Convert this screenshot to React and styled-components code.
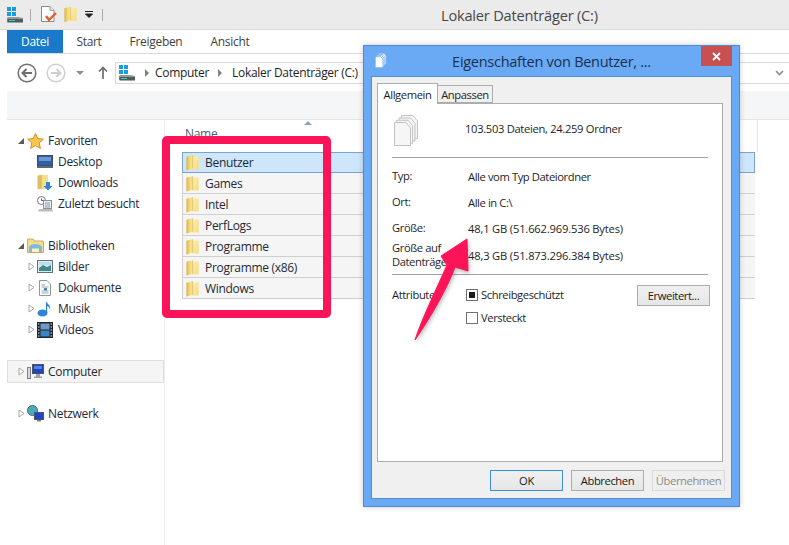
import React from "react"
import styled, { createGlobalStyle } from "styled-components"

const GlobalStyle = createGlobalStyle`
  html, body {
    margin: 0;
    padding: 0;
    background: #fff;
  }
  * {
    box-sizing: border-box;
  }
`

const Screen = styled.div`
  position: relative;
  width: 789px;
  height: 545px;
  overflow: hidden;
  display: flex;
  flex-direction: column;
  background: #fff;
  color: #1e1e1e;
  font-family: "Open Sans", "Noto Sans", sans-serif;
  font-size: 12px;
  letter-spacing: -0.3px;
`

const TitleBar = styled.header`
  position: relative;
  height: 30px;
  flex: none;
  display: flex;
  align-items: center;
  padding-left: 7px;
  background: #ebebeb;
  border-bottom: 1px solid #dcdcdc;
`

const QuickSep = styled.span`
  width: 1px;
  height: 12px;
  margin: 0 ${(p) => p.$gap}px;
  background: #a8a8a8;
`

const QuickSpacer = styled.span`
  width: 4px;
`

const WindowTitle = styled.div`
  position: absolute;
  left: 441px;
  top: 5px;
  font-size: 14.6px;
  letter-spacing: -0.2px;
  color: #474747;
`

const Chrome = styled.div`
  flex: 1;
  min-height: 0;
  display: flex;
  flex-direction: column;
  margin-left: 7px;
`

const RibbonTabs = styled.nav`
  height: 24px;
  flex: none;
  display: flex;
  border-bottom: 1px solid #dadbdc;
`

const RibbonTab = styled.div`
  width: ${(p) => p.$w}px;
  height: 23px;
  display: flex;
  align-items: center;
  justify-content: center;
  color: ${(p) => (p.$active ? "#fff" : "#3f3f3f")};
  background: ${(p) => (p.$active ? "#1979ca" : "transparent")};
`

const AddressRow = styled.div`
  height: 37px;
  flex: none;
  display: flex;
  align-items: center;
  padding: 0 0 0 10px;
`

const NavButtons = styled.div`
  width: 98px;
  flex: none;
  display: flex;
  align-items: center;
`

const AddressBox = styled.div`
  flex: 1;
  height: 22px;
  display: flex;
  align-items: center;
  padding: 0 5px 0 3px;
  border: 1px solid #d9d9d9;
  border-right: none;
  color: #1e1e1e;
`

const Crumb = styled.span`
  margin-left: ${(p) => p.$left}px;
`

const CrumbCaret = styled.span`
  width: 0;
  height: 0;
  margin-left: ${(p) => p.$left}px;
  border-style: solid;
  border-width: 4px 0 4px 4px;
  border-color: transparent transparent transparent #808080;
`

const AddressChevron = styled.svg`
  margin-left: auto;
`

const SearchBand = styled.div`
  height: 29px;
  flex: none;
  background: #f5f6f7;
  border-bottom: 1px solid #e4e5e6;
`

const Content = styled.div`
  flex: 1;
  min-height: 0;
  display: flex;
`

const NavPane = styled.aside`
  width: 158px;
  flex: none;
  padding-top: 10px;
  border-right: 1px solid #ececec;
  display: flex;
  flex-direction: column;
  gap: 21px;
`

const NavGroup = styled.div`
  display: flex;
  flex-direction: column;
`

const NavRow = styled.div`
  height: 21px;
  display: flex;
  align-items: center;
  margin: 0 1px;
  padding-left: ${(p) => p.$indent}px;
  color: #1e2a36;
  background: ${(p) => (p.$selected ? "#f5f5f5" : "transparent")};
  outline: ${(p) => (p.$selected ? "1px solid #dedede" : "none")};
`

const Expander = styled.span`
  width: 9px;
  flex: none;
  display: flex;
  align-items: center;
`

const Collapse = styled.span`
  width: 0;
  height: 0;
  border-style: solid;
  border-width: 0 0 6px 6px;
  border-color: transparent transparent #5a5a5a transparent;
`

const NavIcon = styled.svg`
  flex: none;
  margin-right: 4px;
`

const LeafIcon = styled(NavIcon)`
  margin-right: 5px;
`

const FilePane = styled.main`
  width: 590px;
  padding-left: 17px;
`

const ColumnHeader = styled.div`
  position: relative;
  width: 576px;
  height: 32px;
  padding: 5px 0 0 3px;
  color: #4c607a;
  border-right: 1px solid #e5e5e5;
`

const SortCaret = styled.span`
  position: absolute;
  left: 122px;
  top: 1px;
  width: 0;
  height: 0;
  border-style: solid;
  border-width: 0 4px 4px 4px;
  border-color: transparent transparent #8fa3b8 transparent;
`

const FileRow = styled.div`
  width: 573px;
  height: 21px;
  display: flex;
  align-items: center;
  gap: 6px;
  padding-left: 3px;
  color: #1e2a36;
  background: ${(p) => (p.$selected ? "#cde6f9" : "#f5f5f5")};
  border: 1px solid ${(p) => (p.$selected ? "#7da2ce" : "transparent")};
  border-bottom-color: ${(p) => (p.$selected ? "#7da2ce" : "#cfcfcf")};
  border-left-color: ${(p) => (p.$selected ? "#7da2ce" : "#cfcfcf")};
`

const Dialog = styled.section`
  position: absolute;
  left: 363px;
  top: 45px;
  width: 377px;
  height: 462px;
  display: flex;
  flex-direction: column;
  padding: 0 7px 7px 7px;
  background: #6aa9f4;
  border: 1px solid #4b8bd6;
  box-shadow: 0 0 6px rgba(0, 0, 0, 0.2);
  font-size: 11.2px;
  letter-spacing: -0.4px;
`

const DialogTitleBar = styled.div`
  position: relative;
  height: 30px;
  flex: none;
  display: flex;
  align-items: center;
  justify-content: center;
  font-size: 14.5px;
  letter-spacing: -0.27px;
  color: #17324f;
`

const TitleIcon = styled.span`
  position: absolute;
  left: 4px;
  top: 7px;
  display: flex;
`

const CloseButton = styled.div`
  position: absolute;
  right: 0;
  top: 0;
  width: 31px;
  height: 20px;
  display: flex;
  align-items: center;
  justify-content: center;
  background: #c75050;
`

const DialogBody = styled.div`
  flex: 1;
  display: flex;
  flex-direction: column;
  padding: 6px 8px 0 5px;
  background: #f0f0f0;
  border: 1px solid #4f8fd8;
`

const TabStrip = styled.div`
  height: 20px;
  flex: none;
  display: flex;
  align-items: flex-end;
`

const DialogTab = styled.div`
  position: relative;
  height: ${(p) => (p.$active ? 21 : 18)}px;
  width: ${(p) => p.$w}px;
  margin-bottom: ${(p) => (p.$active ? -1 : 0)}px;
  display: flex;
  align-items: center;
  justify-content: center;
  background: ${(p) => (p.$active ? "#fff" : "#f0f0f0")};
  border: 1px solid #adadad;
  border-left-width: ${(p) => (p.$active ? 1 : 0)}px;
  border-bottom-width: ${(p) => (p.$active ? 0 : 1)}px;
  z-index: ${(p) => (p.$active ? 1 : 0)};
`

const TabPage = styled.div`
  height: 359px;
  flex: none;
  padding: 0 14px;
  background: #fff;
  border: 1px solid #adadad;
`

const Summary = styled.div`
  height: 54px;
  display: flex;
  align-items: center;
  padding-left: 2px;
  border-bottom: 1px solid #a0a0a0;
`

const SummaryText = styled.span`
  margin-left: 46px;
  padding-bottom: 4px;
  letter-spacing: -0.32px;
`

const Props = styled.dl`
  margin: 5px 0 0;
  padding-bottom: 5px;
  border-bottom: 1px solid #a0a0a0;
`

const PropRow = styled.div`
  height: ${(p) => (p.$tall ? 28 : 26)}px;
  display: grid;
  grid-template-columns: 76px 1fr;
  align-items: center;
`

const PropLabel = styled.dt`
  line-height: 14px;
  white-space: nowrap;
`

const PropValue = styled.dd`
  margin: 0;
  letter-spacing: ${(p) => (p.$numeric ? "-0.18px" : "inherit")};
`

const Attributes = styled.div`
  display: grid;
  grid-template-columns: 74px 1fr auto;
  grid-template-rows: 23px 23px;
  padding-top: 8px;
  align-items: center;
`

const CheckRow = styled.div`
  grid-column: 2;
  display: flex;
  align-items: center;
  gap: 3px;
`

const CheckBox = styled.span`
  width: 12px;
  height: 12px;
  display: flex;
  align-items: center;
  justify-content: center;
  border: 1px solid #707070;
  background: #fff;
`

const CheckMark = styled.span`
  width: 6px;
  height: 6px;
  background: #1a1a1a;
`

const Button = styled.div`
  width: 73px;
  height: 21px;
  display: flex;
  align-items: center;
  justify-content: center;
  color: ${(p) => (p.$disabled ? "#8b8b8b" : "#1a1a1a")};
  background: ${(p) =>
    p.$disabled ? "#efefef" : "linear-gradient(#f0f0f0, #e6e6e6)"};
  border: 1px solid
    ${(p) => (p.$default ? "#3c8ed8" : p.$disabled ? "#d9d9d9" : "#acacac")};
`

const AdvancedButton = styled(Button)`
  grid-column: 3;
  grid-row: 1;
  margin: 2px -2px 0 0;
`

const DialogActions = styled.div`
  flex: 1;
  display: flex;
  justify-content: flex-end;
  gap: 8px;
  padding: 8px 0 0;
  margin-right: -2px;
`

const RedFrame = styled.div`
  position: absolute;
  left: 162px;
  top: 136px;
  width: 169px;
  height: 182px;
  border: 8px solid #fb1558;
  border-radius: 5px;
`

const Arrow = styled.svg`
  position: absolute;
  left: 405px;
  top: 230px;
  filter: drop-shadow(1px 2px 2px rgba(90, 90, 90, 0.45));
`

const DriveIcon = () => (
  <svg width="17" height="16" viewBox="0 0 17 16">
    <rect x="0" y="0" width="4" height="4" fill="#1c9ce0" />
    <rect x="5" y="0" width="4" height="4" fill="#1c9ce0" />
    <rect x="0" y="5" width="4" height="4" fill="#1c9ce0" />
    <rect x="5" y="5" width="4" height="4" fill="#1c9ce0" />
    <path d="M1 10 L11 10 L16 11 L16 15 L0 15 L0 11 Z" fill="#8f9a9c" />
    <rect x="0.5" y="12" width="15.5" height="3.5" fill="#4d5d60" />
    <rect x="2" y="13" width="6" height="1" fill="#42c7a8" />
  </svg>
)

const TaskIcon = () => (
  <svg width="16" height="17" viewBox="0 0 16 17" style={{ marginRight: 7 }}>
    <path d="M0.5 0.5 H9 L13 4.5 V15.5 H0.5 Z" fill="#fdfdfd" stroke="#8a8a8a" />
    <path d="M9 0.5 V4.5 H13" fill="#e8e8e8" stroke="#9a9a9a" />
    <path d="M5 10 L8 14 L15 7" fill="none" stroke="#e0602a" strokeWidth="2.4" />
  </svg>
)

// shared gradients for every folder icon on the page
const FolderGradients = () => (
  <svg width="0" height="0" style={{ position: "absolute" }}>
    <defs>
      <linearGradient id="folderBack" x1="0" y1="0" x2="1" y2="1">
        <stop offset="0" stopColor="#fbeeb4" />
        <stop offset="1" stopColor="#f4dc84" />
      </linearGradient>
      <linearGradient id="folderFront" x1="0" y1="0" x2="1" y2="0">
        <stop offset="0" stopColor="#d9b24c" />
        <stop offset="0.5" stopColor="#f3d777" />
        <stop offset="1" stopColor="#f8e595" />
      </linearGradient>
    </defs>
  </svg>
)

const FolderIcon = ({ w = 13, h = 16 }) => (
  <svg width={w} height={h} viewBox="0 0 13 16">
    <path d="M6 1.5 H12 Q12.8 1.5 12.8 2.5 V14.5 H6 Z" fill="url(#folderBack)" />
    <path d="M0.4 2.5 Q0.4 1.8 1 1.6 L6.6 0.3 V13.6 L1 15.6 Q0.4 15.6 0.4 15 Z" fill="url(#folderFront)" />
    <path d="M6.6 0.3 V13.6" stroke="#d3b056" strokeWidth="0.6" />
  </svg>
)

const Back = ({ color, dim }) => (
  <svg width="20" height="20" viewBox="0 0 20 20" style={{ marginRight: dim ? 0 : 9 }}>
    <circle cx="10" cy="10" r="8.8" fill="#fff" stroke={color} strokeWidth="1.5" />
    <path
      d={dim ? "M5 10 H14 M10.5 6 L14.5 10 L10.5 14" : "M15 10 H6 M9.5 6 L5.5 10 L9.5 14"}
      fill="none"
      stroke={color}
      strokeWidth="2"
    />
  </svg>
)

const RecentCaret = styled.span`
  width: 0;
  height: 0;
  margin-left: 10px;
  border-style: solid;
  border-width: 4px 4px 0 4px;
  border-color: #8c8c8c transparent transparent transparent;
`

const UpArrow = () => (
  <svg width="10" height="13" viewBox="0 0 10 13" style={{ marginLeft: 14 }}>
    <path d="M5 13 V2 M1 5.5 L5 1.5 L9 5.5" fill="none" stroke="#6f6f6f" strokeWidth="1.7" />
  </svg>
)

const Star = () => (
  <NavIcon width="17" height="16" viewBox="0 0 17 16">
    <path
      d="M8.5 0.5 L10.8 5.6 L16.4 6.2 L12.2 9.9 L13.4 15.4 L8.5 12.6 L3.6 15.4 L4.8 9.9 L0.6 6.2 L6.2 5.6 Z"
      fill="#fbc64e"
      stroke="#e08a2a"
    />
  </NavIcon>
)

const Monitor = () => (
  <LeafIcon width="16" height="13" viewBox="0 0 16 13">
    <rect x="0.5" y="0.5" width="15" height="10" fill="#2f5fa8" stroke="#3d4d63" />
    <rect x="2" y="2" width="12" height="4" fill="#6d95d0" />
    <rect x="0" y="11" width="16" height="2" fill="#5d6774" />
  </LeafIcon>
)

const DownloadFolder = () => (
  <LeafIcon width="16" height="17" viewBox="0 0 16 17">
    <path d="M1 1 H11 V15 H1 Z" fill="#f5de8e" />
    <path d="M0.5 2 L5 0.5 V14 L0.5 15.5 Z" fill="#e0bf60" />
    <path d="M9 8 H13 V12 H15.5 L11 16.5 L6.5 12 H9 Z" fill="#2f86d8" />
  </LeafIcon>
)

const Recent = () => (
  <LeafIcon width="16" height="16" viewBox="0 0 16 16">
    <circle cx="4.5" cy="4.5" r="4" fill="#fff" stroke="#777" />
    <path d="M4.5 2.5 V4.5 H6.5" stroke="#555" fill="none" />
    <rect x="6.5" y="4.5" width="8" height="8" fill="#e8ecef" stroke="#8a9299" />
    <path d="M8 7 H13 M8 9 H13 M8 11 H13" stroke="#8aa0b4" />
    <path d="M2 13 H15 L16 15.5 H1 Z" fill="#b7bdc2" />
  </LeafIcon>
)

const Library = () => (
  <NavIcon width="17" height="15" viewBox="0 0 17 15">
    <path d="M0.5 1 H6 L7.5 3 H16.5 V14.5 H0.5 Z" fill="#f3dc8c" stroke="#c9ad5e" />
    <path d="M2 9 C3 5 13 5 15 9 V14 H2 Z" fill="#7fb9dc" />
    <path d="M5 14 V10.5 H12 V14" fill="#f9f2c8" />
  </NavIcon>
)

const Pictures = () => (
  <LeafIcon width="16" height="13" viewBox="0 0 16 13">
    <rect x="0.5" y="0.5" width="15" height="12" fill="#dfeaf0" stroke="#64717c" />
    <path d="M2 8 L6 5 L10 7 L14 5 V11 H2 Z" fill="#3f8a8c" />
    <rect x="2" y="2" width="12" height="3" fill="#bcdcee" />
  </LeafIcon>
)

const Documents = () => (
  <LeafIcon width="16" height="16" viewBox="0 0 16 16">
    <path d="M2.5 0.5 H10 L13.5 4 V15.5 H2.5 Z" fill="#fdfdfd" stroke="#8b98a4" />
    <path d="M4.5 5 H8 M4.5 7 H11.5 M4.5 11 H11.5 M4.5 13 H11.5" stroke="#95a8b8" />
    <rect x="7" y="8" width="3" height="2.5" fill="#4f7fb0" />
  </LeafIcon>
)

const Music = () => (
  <LeafIcon width="16" height="17" viewBox="0 0 16 17">
    <ellipse cx="5.5" cy="13" rx="5" ry="3.6" fill="#2f86d8" />
    <path d="M9 13 V1 C10 4 14 5 13 10 C12.5 7 11 6.5 10.2 6 V13 Z" fill="#2f86d8" />
  </LeafIcon>
)

const Film = () => (
  <LeafIcon width="16" height="16" viewBox="0 0 16 16">
    <rect x="0" y="0" width="16" height="16" fill="#20262c" />
    <rect x="3.5" y="1.5" width="9" height="6" fill="#6c9ac4" />
    <rect x="3.5" y="8.5" width="9" height="6" fill="#3c86c8" />
    <path d="M1 2 H2.5 M1 5 H2.5 M1 8 H2.5 M1 11 H2.5 M1 14 H2.5 M13.5 2 H15 M13.5 5 H15 M13.5 8 H15 M13.5 11 H15 M13.5 14 H15" stroke="#e4e4e4" />
  </LeafIcon>
)

const ComputerIcon = () => (
  <NavIcon width="17" height="15" viewBox="0 0 17 15">
    <rect x="0.5" y="3.5" width="3" height="11" fill="#d7d9db" stroke="#7d8288" />
    <rect x="5.5" y="0.5" width="11" height="9" fill="#1f46c0" stroke="#4d5660" />
    <rect x="7" y="2" width="8" height="3" fill="#5580e8" />
    <path d="M9 10 H13 V12.5 H15 V14 H7 V12.5 H9 Z" fill="#9ca3aa" />
  </NavIcon>
)

const NetworkIcon = () => (
  <NavIcon width="17" height="17" viewBox="0 0 17 17">
    <circle cx="5.5" cy="5.5" r="5" fill="#4aa6d8" stroke="#28709a" />
    <path d="M2 3 C4 1 7 2 6 4 C5 6 3 5 3 8 Z M7 7 L10 6 L9 10 Z" fill="#58b24c" />
    <rect x="7.5" y="7.5" width="9" height="7" fill="#1f46c0" stroke="#4d5660" />
    <path d="M10 15 H14 V16.5 H10 Z" fill="#7b838a" />
  </NavIcon>
)

const StackIcon = ({ width, height, light }) => (
  <svg width={width} height={height} viewBox="0 0 25 31">
    {[7, 4.5, 2.2, 0].map((o) => (
      <path
        key={o}
        d={`M${o + 0.5} ${7 - o + 0.5} H${o + 12} L${o + 16.5} ${7 - o + 6} V${7 - o + 23.5} H${o + 0.5} Z`}
        fill={light ? "#fff" : "#f6f6f6"}
        stroke={light ? "#6aa9f4" : "#c2c2c2"}
        strokeWidth={light ? 1.6 : 1}
      />
    ))}
  </svg>
)

const CaretGlyph = () => (
  <svg width="8" height="9" viewBox="0 0 8 9">
    <path d="M1 1 L6 4.5 L1 8 Z" fill="#fff" stroke="#a6a6a6" />
  </svg>
)

const favorites = [
  ["Desktop", Monitor],
  ["Downloads", DownloadFolder],
  ["Zuletzt besucht", Recent],
]

const libraries = [
  ["Bilder", Pictures],
  ["Dokumente", Documents],
  ["Musik", Music],
  ["Videos", Film],
]

const folders = ["Benutzer", "Games", "Intel", "PerfLogs", "Programme", "Programme (x86)", "Windows"]

const App = () => (
  <Screen>
    <GlobalStyle />
    <FolderGradients />
    <TitleBar>
      <DriveIcon />
      <QuickSep $gap={6} />
      <QuickSpacer />
      <TaskIcon />
      <FolderIcon w={13} h={17} />
      <svg width="8" height="7" viewBox="0 0 8 7" style={{ marginLeft: 8 }}>
        <path d="M0 0.5 H8 M0.5 3 H7.5 L4 6.5 Z" stroke="#222" fill="#222" />
      </svg>
      <QuickSep $gap={9} />
      <WindowTitle>Lokaler Datenträger (C:)</WindowTitle>
    </TitleBar>
    <Chrome>
      <RibbonTabs>
        <RibbonTab $active $w={56}>Datei</RibbonTab>
        <RibbonTab $w={52}>Start</RibbonTab>
        <RibbonTab $w={82}>Freigeben</RibbonTab>
        <RibbonTab $w={66}>Ansicht</RibbonTab>
      </RibbonTabs>
      <AddressRow>
        <NavButtons>
          <Back color="#6e6e6e" />
          <Back color="#cfcfcf" dim />
          <RecentCaret />
          <UpArrow />
        </NavButtons>
        <AddressBox>
          <DriveIcon />
          <CrumbCaret $left={9} />
          <Crumb $left={6}>Computer</Crumb>
          <CrumbCaret $left={9} />
          <Crumb $left={10}>Lokaler Datenträger (C:)</Crumb>
          <AddressChevron width="9" height="6" viewBox="0 0 9 6">
            <path d="M1 1 L4.5 4.5 L8 1" fill="none" stroke="#8a8a8a" strokeWidth="1.6" />
          </AddressChevron>
        </AddressBox>
      </AddressRow>
      <SearchBand />
      <Content>
        <NavPane>
          <NavGroup>
            <NavRow $indent={10}>
              <Expander><Collapse /></Expander>
              <Star />
              Favoriten
            </NavRow>
            {favorites.map(([label, Icon]) => (
              <NavRow key={label} $indent={29}>
                <Icon />
                {label}
              </NavRow>
            ))}
          </NavGroup>
          <NavGroup>
            <NavRow $indent={10}>
              <Expander><Collapse /></Expander>
              <Library />
              Bibliotheken
            </NavRow>
            {libraries.map(([label, Icon]) => (
              <NavRow key={label} $indent={20}>
                <Expander><CaretGlyph /></Expander>
                <Icon />
                {label}
              </NavRow>
            ))}
          </NavGroup>
          <NavGroup>
            <NavRow $indent={10} $selected>
              <Expander><CaretGlyph /></Expander>
              <ComputerIcon />
              Computer
            </NavRow>
          </NavGroup>
          <NavGroup>
            <NavRow $indent={10}>
              <Expander><CaretGlyph /></Expander>
              <NetworkIcon />
              Netzwerk
            </NavRow>
          </NavGroup>
        </NavPane>
        <FilePane>
          <ColumnHeader>
            Name
            <SortCaret />
          </ColumnHeader>
          {folders.map((name, i) => (
            <FileRow key={name} $selected={i === 0}>
              <FolderIcon />
              {name}
            </FileRow>
          ))}
        </FilePane>
      </Content>
    </Chrome>

    <Dialog>
      <DialogTitleBar>
        <TitleIcon><StackIcon width={12} height={15} light /></TitleIcon>
        Eigenschaften von Benutzer, ...
        <CloseButton>
          <svg width="9" height="9" viewBox="0 0 9 9">
            <path d="M1 1 L8 8 M8 1 L1 8" stroke="#fff" strokeWidth="1.8" />
          </svg>
        </CloseButton>
      </DialogTitleBar>
      <DialogBody>
        <TabStrip>
          <DialogTab $active $w={61}>Allgemein</DialogTab>
          <DialogTab $w={55}>Anpassen</DialogTab>
        </TabStrip>
        <TabPage>
          <Summary>
            <StackIcon width={25} height={31} />
            <SummaryText>103.503 Dateien, 24.259 Ordner</SummaryText>
          </Summary>
          <Props>
            <PropRow>
              <PropLabel>Typ:</PropLabel>
              <PropValue>Alle vom Typ Dateiordner</PropValue>
            </PropRow>
            <PropRow>
              <PropLabel>Ort:</PropLabel>
              <PropValue>Alle in C:\</PropValue>
            </PropRow>
            <PropRow>
              <PropLabel>Größe:</PropLabel>
              <PropValue $numeric>48,1 GB (51.662.969.536 Bytes)</PropValue>
            </PropRow>
            <PropRow $tall>
              <PropLabel>Größe auf<br />Datenträger:</PropLabel>
              <PropValue $numeric>48,3 GB (51.873.296.384 Bytes)</PropValue>
            </PropRow>
          </Props>
          <Attributes>
            <PropLabel>Attribute:</PropLabel>
            <CheckRow>
              <CheckBox><CheckMark /></CheckBox>
              Schreibgeschützt
            </CheckRow>
            <AdvancedButton>Erweitert...</AdvancedButton>
            <CheckRow>
              <CheckBox />
              Versteckt
            </CheckRow>
          </Attributes>
        </TabPage>
        <DialogActions>
          <Button $default>OK</Button>
          <Button>Abbrechen</Button>
          <Button $disabled>Übernehmen</Button>
        </DialogActions>
      </DialogBody>
    </Dialog>

    <RedFrame />
    <Arrow width="70" height="120" viewBox="0 0 70 120">
      <path
        d="M62 9 L63 41 L50 37 C44 54 28 84 10 110 C17 88 33 56 42 35 L36 26 Z"
        fill="#fb1558"
        stroke="#fb1558"
        strokeLinejoin="round"
      />
    </Arrow>
  </Screen>
)

export default App
